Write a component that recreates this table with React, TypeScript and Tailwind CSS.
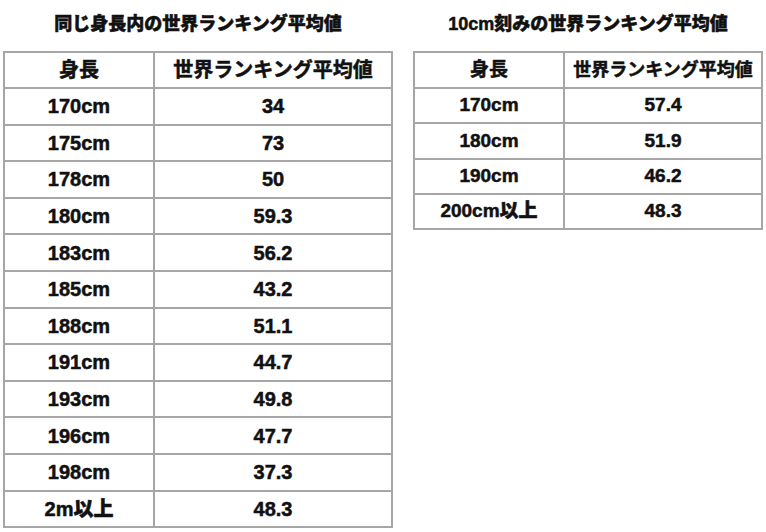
const FONT = {
  fontFamily: '"Liberation Sans", "Noto Sans CJK JP", sans-serif',
};

const byHeight: [string, string][] = [
  ['170cm', '34'],
  ['175cm', '73'],
  ['178cm', '50'],
  ['180cm', '59.3'],
  ['183cm', '56.2'],
  ['185cm', '43.2'],
  ['188cm', '51.1'],
  ['191cm', '44.7'],
  ['193cm', '49.8'],
  ['196cm', '47.7'],
  ['198cm', '37.3'],
  ['2m以上', '48.3'],
];

const by10cm: [string, string][] = [
  ['170cm', '57.4'],
  ['180cm', '51.9'],
  ['190cm', '46.2'],
  ['200cm以上', '48.3'],
];

const cell = 'border-2 border-[#a6a6a6] p-0 text-center align-middle';

export default function App() {
  return (
    <div
      className="flex h-[532px] w-[766px] gap-[20px] bg-white pl-[3px] text-[#111] font-black [-webkit-text-stroke:0.5px_#111]"
      style={FONT}
    >
      <section className="flex w-[390px] flex-col">
        <h2 className="flex h-[51px] items-center justify-center pb-[2px] text-[18px]">
          同じ身長内の世界ランキング平均値
        </h2>
        <table className="w-full border-collapse text-[20px]">
          <thead>
            <tr className="h-[36px]">
              <th className={`${cell} w-[150px]`}>身長</th>
              <th className={cell}>世界ランキング平均値</th>
            </tr>
          </thead>
          <tbody>
            {byHeight.map(([h, v]) => (
              <tr key={h} className="h-[36.6px]">
                <td className={cell}>{h}</td>
                <td className={cell}>{v}</td>
              </tr>
            ))}
          </tbody>
        </table>
      </section>

      <section className="flex w-[350px] flex-col">
        <h2 className="flex h-[51px] items-center justify-center pb-[2px] text-[18px]">
          10cm刻みの世界ランキング平均値
        </h2>
        <table className="w-full border-collapse text-[19px]">
          <thead>
            <tr className="h-[36px]">
              <th className={`${cell} w-[150px]`}>身長</th>
              <th className={`${cell} text-[18px]`}>世界ランキング平均値</th>
            </tr>
          </thead>
          <tbody>
            {by10cm.map(([h, v]) => (
              <tr key={h} className="h-[35.3px]">
                <td className={cell}>{h}</td>
                <td className={cell}>{v}</td>
              </tr>
            ))}
          </tbody>
        </table>
      </section>
    </div>
  );
}
